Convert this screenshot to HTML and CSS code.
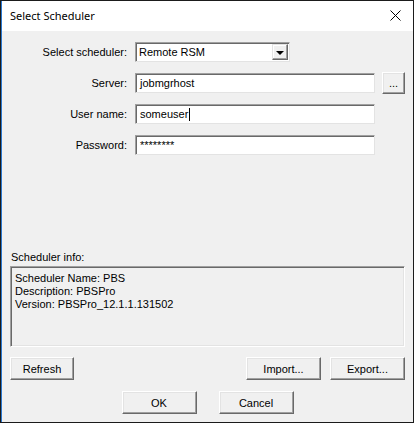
FILE: index.html
```html
<!DOCTYPE html>
<html>
<head>
<meta charset="utf-8">
<link rel="stylesheet" href="styles.css">
</head>
<body>
<div class="window">
  <div class="frame">
    <div class="titlebar">
      <span class="title">Select Scheduler</span>
      <span class="close">
        <svg width="11" height="11" viewBox="0 0 11 11"><path d="M0.5 0.5 L10.5 10.5 M10.5 0.5 L0.5 10.5" stroke="#000" stroke-width="1" fill="none"/></svg>
      </span>
    </div>
    <div class="body">
      <div class="form">
        <label class="lbl">Select scheduler:</label>
        <div class="combo">
          <span class="combo-text">Remote RSM</span>
          <span class="combo-btn"><span class="arrow"></span></span>
        </div>
        <span></span>

        <label class="lbl">Server:</label>
        <div class="input">jobmgrhost</div>
        <button class="btn browse">...</button>

        <label class="lbl">User name:</label>
        <div class="input">someuser<span class="caret"></span></div>
        <span></span>

        <label class="lbl">Password:</label>
        <div class="input pw">********</div>
        <span></span>
      </div>

      <div class="info-label">Scheduler info:</div>
      <div class="info">
        <div>Scheduler Name: PBS</div>
        <div>Description: PBSPro</div>
        <div>Version: PBSPro_12.1.1.131502</div>
      </div>

      <div class="row actions">
        <button class="btn refresh">Refresh</button>
        <div class="spacer"></div>
        <button class="btn">Import...</button>
        <button class="btn">Export...</button>
      </div>
      <div class="row footer">
        <button class="btn default">OK</button>
        <button class="btn">Cancel</button>
      </div>
    </div>
  </div>
</div>
</body>
</html>
```
FILE: styles.css
```css
* { box-sizing: border-box; }
html, body { margin: 0; padding: 0; background: #fff; }
body { width: 414px; height: 423px; overflow: hidden; }

.window {
  width: 414px;
  height: 423px;
  border: 1px solid #1b1b1b;
  background: #f0f0f0;
  font-family: "Liberation Sans", Arial, sans-serif;
  font-size: 11px;
  color: #000;
}
.frame {
  height: 100%;
  border-left: 1px solid #2b79d0;
  display: flex;
  flex-direction: column;
}
.titlebar {
  height: 30px;
  background: #fff;
  display: flex;
  align-items: center;
  justify-content: space-between;
  padding-left: 8px;
  padding-right: 12px;
  flex: none;
}
.title {
  font-family: "Noto Sans", "Open Sans", sans-serif;
  font-size: 11px;
  color: #000;
  margin-top: -1px;
}
.close { display: flex; margin-top: -1px; }

.body {
  flex: 1;
  background: #f0f0f0;
  padding: 11px 8px 0 8px;
  display: flex;
  flex-direction: column;
}

.form {
  display: grid;
  grid-template-columns: 117px 240px 23px;
  grid-auto-rows: 20px;
  column-gap: 8px;
  row-gap: 11px;
  align-items: center;
}
.form .combo { grid-column: 2; width: 155px; }
.lbl {
  text-align: right;
  white-space: nowrap;
}

.input, .combo {
  height: 20px;
  background: #fff;
  border-style: solid;
  border-width: 1px;
  border-color: #a0a0a0 #e3e3e3 #e3e3e3 #a0a0a0;
  box-shadow: inset 1px 1px 0 #696969;
  display: flex;
  align-items: center;
  padding-left: 4px;
  white-space: nowrap;
}
.caret {
  display: inline-block;
  width: 1px;
  height: 13px;
  background: #000;
  margin-left: 1px;
}
.combo { padding-left: 3px; padding-right: 1px; justify-content: space-between; }
.combo-btn {
  width: 16px;
  height: 16px;
  background: #f0f0f0;
  border-style: solid;
  border-width: 1px;
  border-color: #e3e3e3 #696969 #696969 #e3e3e3;
  box-shadow: inset -1px -1px 0 #a0a0a0, inset 1px 1px 0 #fff;
  display: flex;
  align-items: center;
  justify-content: center;
}
.arrow {
  width: 0; height: 0;
  border-left: 4px solid transparent;
  border-right: 4px solid transparent;
  border-top: 4px solid #000;
  margin-top: 1px;
}

.btn {
  font-family: "Liberation Sans", Arial, sans-serif;
  font-size: 11px;
  color: #000;
  background: #f0f0f0;
  height: 23px;
  width: 75px;
  padding: 0;
  border-style: solid;
  border-width: 1px;
  border-color: #fff #696969 #696969 #fff;
  box-shadow: inset -1px -1px 0 #a0a0a0, inset 1px 1px 0 #e3e3e3;
  border-radius: 0;
  outline: none;
}
.browse {
  width: 23px;
  height: 22px;
  margin-left: -1px;
  color: #000;
}

.info-label {
  margin-top: 96px;
  margin-left: 1px;
  height: 14px;
}
.info {
  margin-top: 1px;
  height: 81px;
  border-style: solid;
  border-width: 1px;
  border-color: #a0a0a0 #fff #fff #a0a0a0;
  box-shadow: inset 1px 1px 0 #696969, inset -1px -1px 0 #e3e3e3;
  padding: 5px 4px;
  line-height: 13px;
}

.row { display: flex; }
.actions { margin-top: 10px; gap: 9px; }
.actions .refresh { width: 64px; }
.spacer { flex: 1; }
.footer { margin-top: 11px; justify-content: center; gap: 22px; }
```
